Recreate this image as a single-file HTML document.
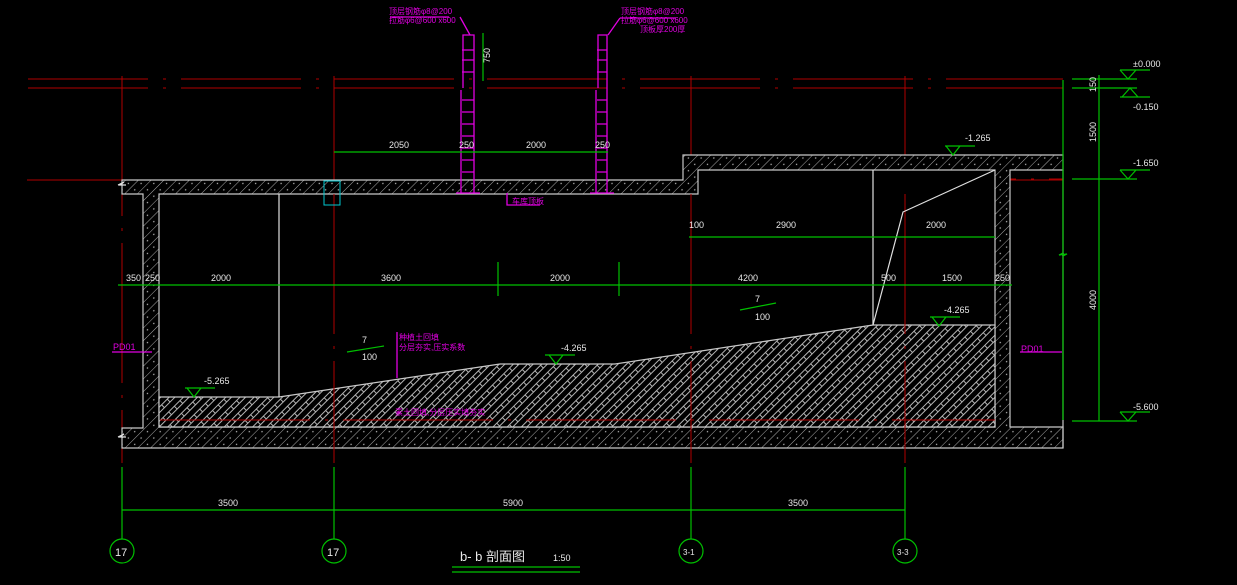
<!DOCTYPE html>
<html><head><meta charset="utf-8"><style>
html,body{margin:0;padding:0;background:#000;width:1237px;height:585px;overflow:hidden}
svg{display:block}
text{font-family:"Liberation Sans","Noto Sans CJK SC",sans-serif}
</style></head><body>
<svg width="1237" height="585" viewBox="0 0 1237 585" xmlns="http://www.w3.org/2000/svg">
<defs>
<pattern id="con" width="9" height="9" patternUnits="userSpaceOnUse" patternTransform="rotate(45)">
<rect width="9" height="9" fill="#000"/><line x1="0" y1="0" x2="0" y2="9" stroke="#a8a8a8" stroke-width="1"/>
<circle cx="4.5" cy="3" r="0.7" fill="#bbb"/></pattern>
<pattern id="earth" width="10" height="8" patternUnits="userSpaceOnUse" patternTransform="rotate(45)">
<rect width="10" height="8" fill="#000"/><line x1="0.5" y1="0" x2="0.5" y2="8" stroke="#b4b4b4" stroke-width="1"/>
<line x1="4.5" y1="0" x2="4.5" y2="8" stroke="#b4b4b4" stroke-width="1"/>
<line x1="0.5" y1="4" x2="4.5" y2="4" stroke="#b4b4b4" stroke-width="1"/></pattern>
</defs>
<rect width="1237" height="585" fill="#000"/>

<g stroke="#b00000" stroke-width="1">
<line x1="28" y1="79" x2="1063" y2="79" stroke-dasharray="120,15,3,15"/>
<line x1="28" y1="88" x2="1063" y2="88" stroke-dasharray="120,15,3,15"/>
<line x1="27" y1="180" x2="1063" y2="180"/>
<line x1="160" y1="420" x2="995" y2="420" stroke-dasharray="150,15,3,15"/>
<line x1="683" y1="179" x2="1063" y2="179" stroke-dasharray="150,15,3,15"/>
<line x1="122" y1="76" x2="122" y2="463" stroke-dasharray="140,12,3,12"/>
<line x1="334" y1="76" x2="334" y2="463" stroke-dasharray="140,12,3,12"/>
<line x1="691" y1="76" x2="691" y2="463" stroke-dasharray="140,12,3,12"/>
<line x1="905" y1="76" x2="905" y2="463" stroke-dasharray="140,12,3,12"/>
</g>

<g stroke="#c8c8c8" stroke-width="1.2">
<path d="M122 180 H683 V155 H1063 V170 H1010 V427 H1063 V448 H122 V428 H143 V194 H122 Z" fill="url(#con)"/>
<path d="M159 194 H698 V170 H995 V427 H159 Z" fill="#000"/>
<path d="M159 397 H279 L500 364 H615 L873 325 H995 V427 H159 Z" fill="url(#earth)"/>
<line x1="1063" y1="170" x2="1063" y2="448"/>
</g>
<g stroke="#b00000" stroke-width="1"><line x1="160" y1="420" x2="995" y2="420" stroke-dasharray="150,15,3,15"/>
<line x1="334" y1="194" x2="334" y2="463" stroke-dasharray="140,12,3,12"/><line x1="691" y1="194" x2="691" y2="463" stroke-dasharray="140,12,3,12"/><line x1="905" y1="194" x2="905" y2="463" stroke-dasharray="140,12,3,12"/></g>
<g stroke="#e0e0e0" stroke-width="1.2" fill="none">
<line x1="279" y1="194" x2="279" y2="397"/>
<line x1="873" y1="170" x2="873" y2="325"/>
<path d="M873 325 L903 212 L995 170"/>
<path d="M118 185 l6 -3 l-4 3 l6 0" /><path d="M118 437 l6 -3 l-4 3 l6 0"/>
</g>
<rect x="324" y="181" width="16" height="24" fill="none" stroke="#00c8d0"/>

<g stroke="#e000e0" stroke-width="1.3" fill="none">
<path d="M461 193 V90 M463 88 V35 H474 V193 M456 193 H480"/>
<path d="M596 193 V90 M598 88 V35 H607 V193 M590 193 H614"/>
<path d="M462 50 H474 M462 60 H474 M462 72 H474 M462 100 H474 M462 112 H474 M462 124 H474 M462 136 H474 M462 148 H474 M462 160 H474 M462 172 H474"/>
<path d="M597 50 H607 M597 60 H607 M597 72 H607 M597 100 H607 M597 112 H607 M597 124 H607 M597 136 H607 M597 148 H607 M597 160 H607 M597 172 H607"/>
<path d="M449 17 H390 M460 17 L470 35 M620 18 L608 35 M620 18 H676"/>
<path d="M507 193 V205 H540"/>
<path d="M112 352 H152 M1020 352 H1062"/>
<path d="M397 332 V378"/>
</g>
<g fill="#e000e0" font-size="8">
<text x="389" y="14">顶层钢筋φ8@200</text><text x="389" y="23">拉筋φ6@600 x600</text>
<text x="621" y="14">顶层钢筋φ8@200</text><text x="621" y="23">拉筋φ6@600 x600</text><text x="640" y="32">顶板厚200厚</text>
<text x="512" y="204">车库顶板</text>
<text x="113" y="350" font-size="9">PD01</text><text x="1021" y="352" font-size="9">PD01</text>
<text x="399" y="340">种植土回填</text><text x="399" y="350">分层夯实,压实系数</text>
<text x="395" y="415">素土回填,分层压实填夯实</text>
</g>

<g stroke="#00c000" stroke-width="1.2" fill="none">
<line x1="334" y1="152" x2="608" y2="152"/>
<line x1="689" y1="237" x2="995" y2="237"/>
<line x1="118" y1="285" x2="1012" y2="285"/>
<line x1="498" y1="262" x2="498" y2="296"/><line x1="619" y1="262" x2="619" y2="296"/>
<line x1="483" y1="33" x2="483" y2="81"/>
<line x1="122" y1="510" x2="905" y2="510"/>
<line x1="122" y1="467" x2="122" y2="539"/><line x1="334" y1="467" x2="334" y2="539"/>
<line x1="691" y1="467" x2="691" y2="539"/><line x1="905" y1="467" x2="905" y2="539"/>
<circle cx="122" cy="551" r="12"/><circle cx="334" cy="551" r="12"/>
<circle cx="691" cy="551" r="12"/><circle cx="905" cy="551" r="12"/>
<line x1="452" y1="567" x2="580" y2="567"/><line x1="452" y1="572" x2="580" y2="572"/>
<path d="M1063 80 V253 l-4 2 l8 -1 l-4 2 V420"/>
<line x1="1099" y1="75" x2="1099" y2="421"/>
<path d="M1072 79 H1137 M1072 88 H1137 M1072 179 H1137 M1072 421 H1137"/>
<path d="M1120 70 H1150 M1120 70 l8 9 l8 -9 M1120 97 H1150 M1122 97 l8 -9 l8 9 M1120 170 H1150 M1120 170 l8 9 l8 -9 M1120 412 H1150 M1120 412 l8 9 l8 -9"/>
<path d="M185 388 H215 M187 388 l7 9 l7 -9 M545 355 H575 M549 355 l7 9 l7 -9 M930 317 H960 M932 317 l7 9 l7 -9 M945 146 H975 M946 146 l7 9 l7 -9"/>
<path d="M347 352 L384 346 M740 310 L776 303"/>
</g>

<g fill="#e8e8e8" font-size="9">
<text x="389" y="148">2050</text><text x="459" y="148">250</text><text x="526" y="148">2000</text><text x="595" y="148">250</text>
<text x="689" y="228">100</text><text x="776" y="228">2900</text><text x="926" y="228">2000</text>
<text x="126" y="281">350</text><text x="145" y="281">250</text><text x="211" y="281">2000</text><text x="381" y="281">3600</text>
<text x="550" y="281">2000</text><text x="738" y="281">4200</text><text x="881" y="281">500</text><text x="942" y="281">1500</text><text x="995" y="281">250</text>
<text x="218" y="506">3500</text><text x="503" y="506">5900</text><text x="788" y="506">3500</text>
<text x="204" y="384">-5.265</text><text x="561" y="351">-4.265</text><text x="944" y="313">-4.265</text><text x="965" y="141">-1.265</text>
<text x="1133" y="67">±0.000</text><text x="1133" y="110">-0.150</text><text x="1133" y="166">-1.650</text><text x="1133" y="410">-5.600</text>
<text x="362" y="343">7</text><text x="362" y="360">100</text><text x="755" y="302">7</text><text x="755" y="320">100</text>
<text transform="translate(490 63) rotate(-90)">750</text>
<text transform="translate(1096 92) rotate(-90)">150</text>
<text transform="translate(1096 142) rotate(-90)">1500</text>
<text transform="translate(1096 310) rotate(-90)">4000</text>
<text x="115" y="556" font-size="11">17</text><text x="327" y="556" font-size="11">17</text>
<text x="683" y="555" font-size="8">3-1</text><text x="897" y="555" font-size="8">3-3</text>
<text x="460" y="561" font-size="13">b- b 剖面图</text><text x="553" y="561" font-size="9">1:50</text>
</g>
</svg>
</body></html>
